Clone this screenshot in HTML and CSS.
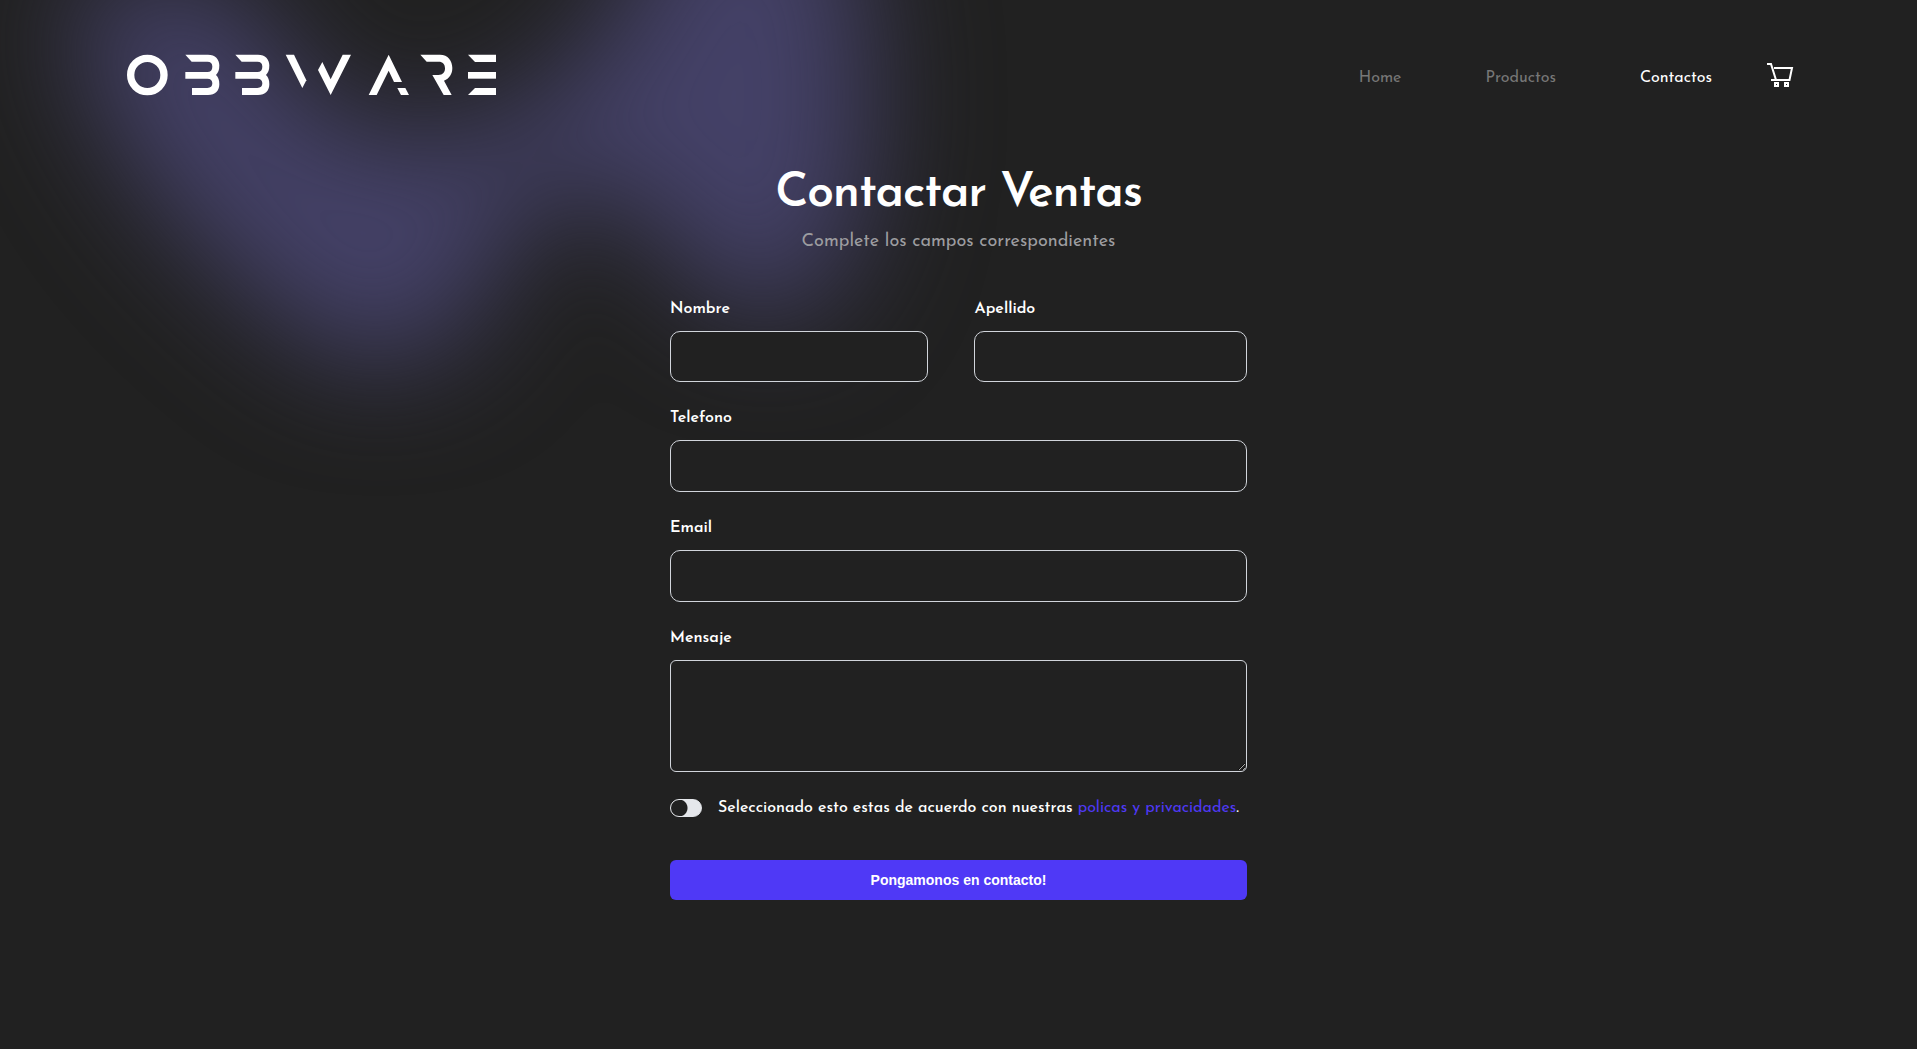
FILE: index.html
```html
<!DOCTYPE html>
<html lang="es">
<head>
  <meta charset="utf-8">
  <meta name="viewport" content="width=device-width, initial-scale=1">
  <title>Obbware - Contactos</title>
  <link rel="stylesheet" href="styles.css">
</head>
<body>
  <svg class="glow" width="1100" height="640" viewBox="0 0 1100 640" aria-hidden="true">
    <defs>
      <filter id="soft" filterUnits="userSpaceOnUse" x="-300" y="-300" width="1600" height="1100" color-interpolation-filters="sRGB">
        <feGaussianBlur stdDeviation="58"/>
      </filter>
    </defs>
    <g filter="url(#soft)" fill="#444167">
      <path d="M75 0 C110 -40 220 -40 265 20 C290 90 330 130 410 135 C490 140 550 90 615 20 C650 -90 700 -140 800 -130 C860 -90 870 20 870 110 C870 210 840 320 770 320 C690 310 655 200 590 185 C535 190 520 220 495 270 C465 370 370 385 310 340 C230 280 80 150 75 0Z"/>
    </g>
  </svg>

  <header class="header">
    <a class="logo" href="#" aria-label="Obbware">
      <svg width="370" height="42" viewBox="51 42 1110 126" aria-hidden="true">
        <circle cx="112" cy="105" r="50" fill="none" stroke="#fff" stroke-width="22"/>
        <g id="bars" fill="#fff">
          <path d="M226 44H294C316 44 328 58 328 76C328 90 325 98 318 105C325 112 328 120 328 133C328 152 316 165 294 165H246V144H292C302 144 307 139 307 130C307 121 302 116 292 116H226V96H292C302 96 307 90 307 80C307 70 302 65 292 65H245Z"/>
        </g>
        <use href="#bars" x="150"/>
        <g fill="#fff">
          <path d="M527 44H552L589 121L577 144Z"/>
          <path d="M637 66L624 90L662 165L723 44H698L662 118Z"/>
          <path d="M776 165L836 44L876 126H852L836 92L800 165Z"/>
          <path d="M862 144H886L897 165H873Z"/>
          <path d="M931 44H990C1014 44 1027 62 1027 84C1027 102 1018 116 1002 122L1025 165H1001L967 105H985C999 105 1005 97 1005 85C1005 72 998 65 986 65H950Z"/>
          <path d="M1074 44H1158V66H1095Z"/>
          <path d="M1074 96H1158V116H1074Z"/>
          <path d="M1095 144H1158V165H1074Z"/>
        </g>
      </svg>
    </a>
    <nav class="nav">
      <a class="nav-link" href="#">Home</a>
      <a class="nav-link" href="#">Productos</a>
      <a class="nav-link active" href="#" aria-current="page">Contactos</a>
      <a class="cart" href="#" aria-label="Carrito">
        <svg width="28" height="26" viewBox="0 0 28 26" fill="none" stroke="#fff" aria-hidden="true">
          <path d="M1 2H5L10 18M8 6H26L23.500 18H5" stroke-width="2"/>
          <path d="M9 21H12V24H9ZM19 21H22V24H19Z" stroke-width="2"/>
        </svg>
      </a>
    </nav>
  </header>

  <main class="contact">
    <h1 class="title">Contactar Ventas</h1>
    <p class="subtitle">Complete los campos correspondientes</p>

    <form class="form">
      <div class="names">
        <div class="field">
          <label for="nombre">Nombre</label>
          <input class="input" id="nombre" type="text">
        </div>
        <div class="field">
          <label for="apellido">Apellido</label>
          <input class="input" id="apellido" type="text">
        </div>
      </div>
      <div class="field">
        <label for="telefono">Telefono</label>
        <input class="input" id="telefono" type="tel">
      </div>
      <div class="field">
        <label for="email">Email</label>
        <input class="input" id="email" type="email">
      </div>
      <div class="field">
        <label for="mensaje">Mensaje</label>
        <textarea class="input message" id="mensaje"></textarea>
      </div>
      <div class="terms">
        <input class="switch" id="terms" type="checkbox">
        <label for="terms">Seleccionado esto estas de acuerdo con nuestras <a href="#">policas y privacidades</a>.</label>
      </div>
      <button class="submit" type="submit">Pongamonos en contacto!</button>
    </form>
  </main>
</body>
</html>
```

FILE: styles.css
```css
* {
  box-sizing: border-box;
}

body {
  margin: 0;
  min-height: 100vh;
  position: relative;
  overflow-x: hidden;
  background: #212121;
  color: #fff;
  font-family: "Josefin Sans", Lato, sans-serif;
  font-size: 16px;
}

a {
  color: inherit;
  text-decoration: none;
}

.glow {
  position: absolute;
  top: 0;
  left: 0;
  z-index: -1;
}

.header {
  display: flex;
  align-items: center;
  justify-content: space-between;
  height: 150px;
  padding: 0 123px 0 127px;
}

.logo svg,
.cart svg {
  display: block;
}

.nav {
  display: flex;
  align-items: center;
}

.nav-link {
  margin-right: 84px;
  padding-top: 6px;
  color: #777;
}

.nav-link.active {
  margin-right: 54px;
  color: #fff;
}

.contact {
  width: 577px;
  max-width: 100%;
  margin: 0 auto;
  padding-top: 14px;
  padding-bottom: 80px;
}

.title {
  margin: 0;
  text-align: center;
  font-size: 48px;
  font-weight: 600;
  letter-spacing: -0.025em;
  line-height: 60px;
}

.subtitle {
  margin: 6px 0 0;
  text-align: center;
  font-size: 18px;
  line-height: 24px;
  color: #9d9da0;
}

.form {
  display: grid;
  gap: 24px;
  margin-top: 43px;
}

.names {
  display: grid;
  grid-template-columns: 258fr 272fr;
  gap: 46px;
}

.names .input {
  height: 51px;
}

.field {
  display: grid;
  gap: 10px;
  min-width: 0;
}

.field label {
  font-weight: 600;
  line-height: 24px;
}

.input {
  display: block;
  width: 100%;
  height: 52px;
  padding: 8px 14px;
  border: 1px solid #d1d5db;
  border-radius: 10px;
  background: #212121;
  color: #fff;
  font: inherit;
}

.message {
  height: 112px;
  border-radius: 6px;
  resize: vertical;
}

.terms {
  display: flex;
  align-items: center;
  gap: 16px;
  line-height: 24px;
}

.terms label {
  white-space: nowrap;
  font-weight: 500;
}

.terms a {
  color: #4f39f6;
  font-weight: 400;
}

.switch {
  appearance: none;
  flex: none;
  width: 32px;
  height: 18px;
  margin: 0;
  border: 1px solid #e5e7eb;
  border-radius: 9px;
  background: radial-gradient(circle at 8px 8px, #212121 8px, #e5e7eb 9px);
}

.submit {
  height: 40px;
  margin-top: 16px;
  border: 0;
  border-radius: 6px;
  background: #4f39f6;
  color: #fff;
  font: 700 14px "Liberation Sans", Arial, sans-serif;
}
```
